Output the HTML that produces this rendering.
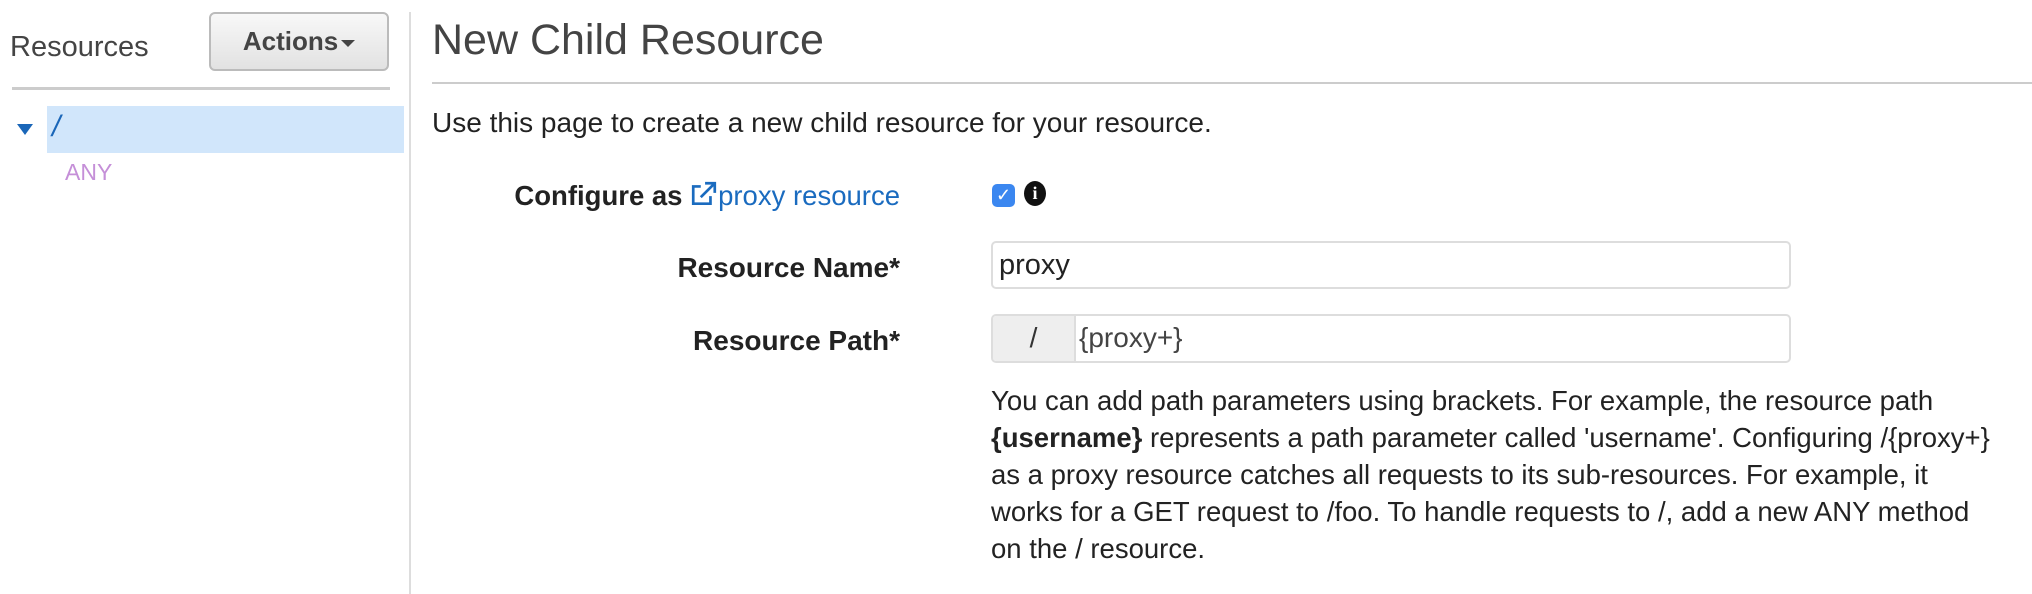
<!DOCTYPE html>
<html><head><meta charset="utf-8"><style>
*{margin:0;padding:0;box-sizing:border-box}
body{width:2032px;height:594px;background:#fff;font-family:"Liberation Sans",Arial,sans-serif;color:#222;position:relative;overflow:hidden}
.a{position:absolute;white-space:nowrap}
</style></head><body>
<div class="a" style="left:10px;top:31px;font-size:29px;color:#444">Resources</div>
<div class="a" style="left:209px;top:12px;width:180px;height:59px;border:2px solid #bbb;border-radius:6px;background:linear-gradient(#f8f8f8,#e2e2e2);font-size:26px;font-weight:bold;color:#444;text-align:center;line-height:55px">Actions<span style="display:inline-block;width:0;height:0;border-left:7px solid transparent;border-right:7px solid transparent;border-top:7px solid #444;vertical-align:middle;margin-left:3px"></span></div>
<div class="a" style="left:12px;top:87px;width:378px;height:3px;background:#ccc"></div>
<div class="a" style="left:409px;top:12px;width:2px;height:582px;background:#ddd"></div>
<div class="a" style="left:47px;top:106px;width:357px;height:47px;background:#d1e6fb"></div>
<div class="a" style="left:17px;top:124px;width:0;height:0;border-left:8px solid transparent;border-right:8px solid transparent;border-top:11px solid #1a66b8"></div>
<div class="a" style="left:52px;top:110px;font-size:30px;font-style:italic;color:#1a66b8">/</div>
<div class="a" style="left:65px;top:159px;font-size:23px;color:#c58fd8">ANY</div>
<div class="a" style="left:432px;top:16px;font-size:43px;color:#444">New Child Resource</div>
<div class="a" style="left:432px;top:82px;width:1600px;height:2px;background:#ccc"></div>
<div class="a" style="left:432px;top:107px;font-size:28px;color:#222">Use this page to create a new child resource for your resource.</div>
<div class="a" style="left:0;top:180px;width:900px;text-align:right;font-size:27.5px;font-weight:bold">Configure as <span style="font-weight:normal;color:#1a6bbf"><svg width="28" height="26" viewBox="0 0 26 24" style="vertical-align:-2px"><path d="M10 5H3v16h16v-7" fill="none" stroke="#1a6bbf" stroke-width="2.5"/><path d="M10 15L22 3M14 2h9v9" fill="none" stroke="#1a6bbf" stroke-width="2.5"/></svg>proxy resource</span></div>
<div class="a" style="left:992px;top:184px;width:23px;height:23px;background:#3b87f0;border-radius:5px;color:#fff;font-size:18px;text-align:center;line-height:23px">✓</div>
<div class="a" style="left:1024px;top:181px;width:22px;height:25px;background:#111;border-radius:50%;color:#fff;font-size:18px;font-weight:bold;font-family:'Liberation Serif',serif;text-align:center;line-height:25px">i</div>
<div class="a" style="left:0;top:252px;width:900px;text-align:right;font-size:28px;font-weight:bold">Resource Name*</div>
<div class="a" style="left:991px;top:241px;width:800px;height:48px;border:2px solid #ddd;border-radius:5px;font-size:29px;line-height:44px;padding-left:6px">proxy</div>
<div class="a" style="left:0;top:325px;width:900px;text-align:right;font-size:28px;font-weight:bold">Resource Path*</div>
<div class="a" style="left:991px;top:314px;width:800px;height:49px;border:2px solid #ddd;border-radius:5px;overflow:hidden"><div style="position:absolute;left:0;top:0;width:83px;height:100%;background:#eee;border-right:2px solid #ddd;font-size:28px;text-align:center;line-height:44px;color:#333">/</div><div style="position:absolute;left:86px;top:0;font-size:28px;line-height:44px;color:#444">{proxy+}</div></div>
<div class="a" style="left:991px;top:382px;font-size:27.5px;line-height:37px;color:#222">You can add path parameters using brackets. For example, the resource path<br><b>{username}</b> represents a path parameter called 'username'. Configuring /{proxy+}<br>as a proxy resource catches all requests to its sub-resources. For example, it<br>works for a GET request to /foo. To handle requests to /, add a new ANY method<br>on the / resource.</div>
</body></html>
